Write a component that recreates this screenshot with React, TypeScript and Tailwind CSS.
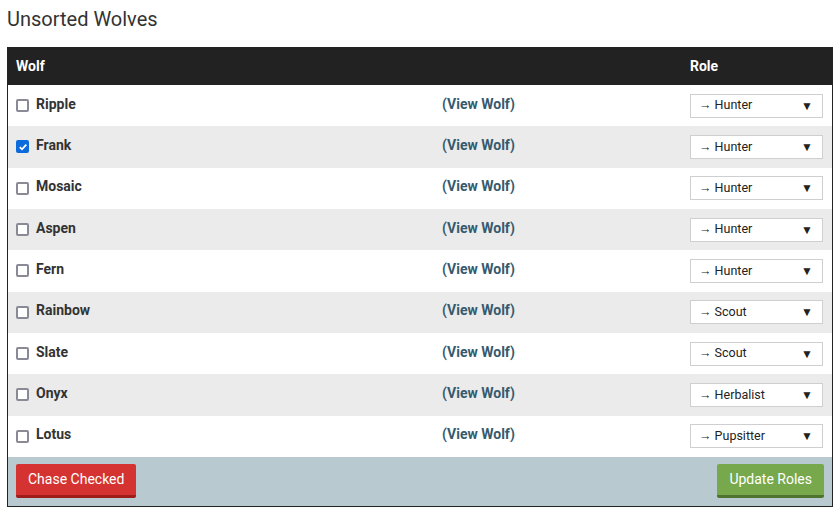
import React, { useState } from "react";

type Wolf = { name: string; role: string };

const wolves: Wolf[] = [
  { name: "Ripple", role: "Hunter" },
  { name: "Frank", role: "Hunter" },
  { name: "Mosaic", role: "Hunter" },
  { name: "Aspen", role: "Hunter" },
  { name: "Fern", role: "Hunter" },
  { name: "Rainbow", role: "Scout" },
  { name: "Slate", role: "Scout" },
  { name: "Onyx", role: "Herbalist" },
  { name: "Lotus", role: "Pupsitter" },
];

const Checkbox = ({ checked, onClick }: { checked: boolean; onClick: () => void }) =>
  checked ? (
    <span
      onClick={onClick}
      className="flex h-[13px] w-[13px] shrink-0 items-center justify-center rounded-[2px] bg-[#0b6bdc]"
    >
      <svg width="10" height="10" viewBox="0 0 10 10">
        <path d="M1.8 5.2 L4 7.3 L8.3 2.6" fill="none" stroke="white" strokeWidth="1.8" />
      </svg>
    </span>
  ) : (
    <span
      onClick={onClick}
      className="block h-[13px] w-[13px] shrink-0 rounded-[2px] border-2 border-[#8a8a96] bg-white"
    />
  );

const RoleSelect = ({ role }: { role: string }) => (
  <div className="flex h-[24px] w-[133px] items-center justify-between border border-[#cfcfcf] bg-white pl-[8px] pr-[9px] text-[12.5px] text-[#222]">
    <span>→ {role}</span>
    <span className="text-[12px]">▼</span>
  </div>
);

export default function App() {
  const [checked, setChecked] = useState<Record<string, boolean>>({ Frank: true });

  return (
    <div
      className="min-h-[521px] bg-white px-[7px] pt-[6px] text-[#333]"
      style={{ fontFamily: "Roboto, 'Liberation Sans', sans-serif" }}
    >
      <h1 className="mb-[15px] text-[20px] leading-[26px] font-normal text-[#333]">Unsorted Wolves</h1>
      <div className="w-[826px] border border-[#222]">
        <div className="flex h-[37px] items-center bg-[#222] text-[14px] font-bold text-white">
          <div className="w-[427px] pl-[8px]">Wolf</div>
          <div className="w-[248px]" />
          <div className="pl-[7px]">Role</div>
        </div>
        {wolves.map((w, i) => (
          <div
            key={w.name}
            className={`flex h-[41.34px] items-center text-[14px] font-bold ${i % 2 === 1 ? "bg-[#ebebeb]" : "bg-white"}`}
          >
            <div className="flex w-[427px] items-center gap-[7px] pl-[8px]">
              <span>
                <Checkbox
                  checked={!!checked[w.name]}
                  onClick={() => setChecked({ ...checked, [w.name]: !checked[w.name] })}
                />
              </span>
              <span className="-mt-[3px]">{w.name}</span>
            </div>
            <div className="-mt-[3px] w-[248px] pl-[7px] text-[#355a6e]">(View Wolf)</div>
            <div className="pl-[7px] font-normal">
              <RoleSelect role={w.role} />
            </div>
          </div>
        ))}
        <div className="flex h-[49px] items-center justify-between bg-[#b8c9d0] px-[8px]">
          <button className="h-[34px] rounded-[2px] border-b-[3px] border-[#9e1c1a] bg-[#d43331] px-[12px] text-[14px] text-white">
            Chase Checked
          </button>
          <button className="h-[34px] rounded-[2px] border-b-[3px] border-[#4f7430] bg-[#77a84b] px-[12px] text-[14px] text-white">
            Update Roles
          </button>
        </div>
      </div>
    </div>
  );
}
